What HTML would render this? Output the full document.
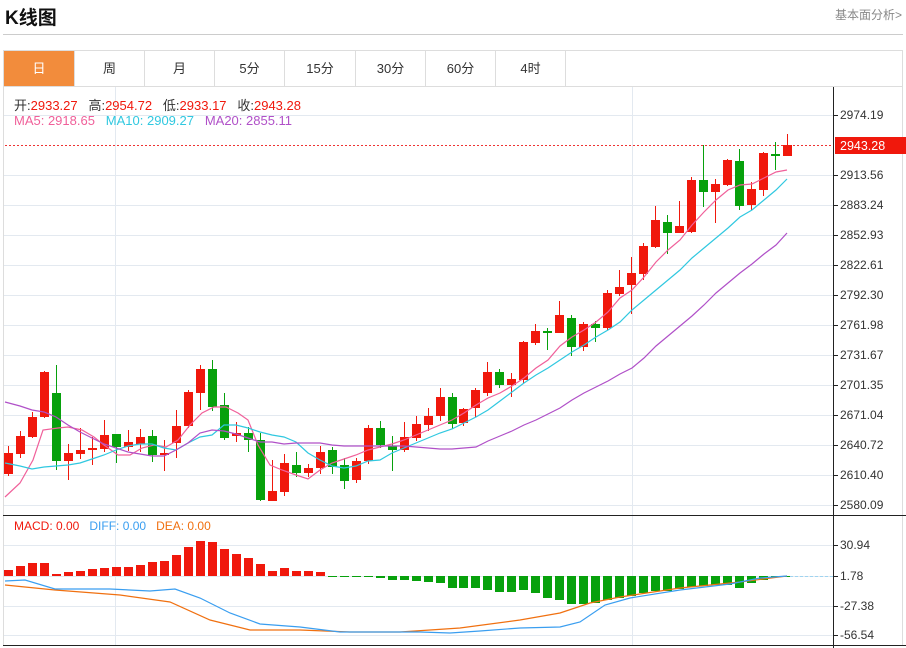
<!DOCTYPE html>
<html><head><meta charset="utf-8">
<style>
*{margin:0;padding:0;box-sizing:border-box}
body{width:906px;height:648px;background:#fff;font-family:"Liberation Sans","Noto Sans CJK SC",sans-serif;position:relative;overflow:hidden}
.t{position:absolute;left:5px;top:3px;font-size:19px;font-weight:bold;color:#111}
.r{position:absolute;right:4px;top:6px;font-size:12px;color:#888}
.hr{position:absolute;left:3px;top:34px;width:900px;height:1px;background:#ccc}
.tabs{position:absolute;left:3px;top:50px;width:900px;height:37px;border:1px solid #ddd;border-bottom:none}
.tab{position:absolute;top:0;height:36px;line-height:36px;text-align:center;font-size:13px;color:#333;border-right:1px solid #ddd}
.on{background:#f28c3c;color:#fff}
svg{position:absolute;left:0;top:0}
.info{position:absolute;left:14px;font-size:13px;white-space:nowrap}
</style></head><body>
<div class="t">K线图</div>
<div class="r">基本面分析&gt;</div>
<div class="hr"></div>
<div class="tabs">
<div class="tab on" style="left:0;width:71px">日</div>
<div class="tab" style="left:71px;width:70px">周</div>
<div class="tab" style="left:141px;width:70px">月</div>
<div class="tab" style="left:211px;width:70px">5分</div>
<div class="tab" style="left:281px;width:71px">15分</div>
<div class="tab" style="left:352px;width:70px">30分</div>
<div class="tab" style="left:422px;width:70px">60分</div>
<div class="tab" style="left:492px;width:70px">4时</div>
</div>
<svg id="s" width="906" height="648"></svg>
<div class="info" style="top:95px;color:#333">开:<span style="color:#f0180c">2933.27</span>&nbsp;&nbsp; 高:<span style="color:#f0180c">2954.72</span>&nbsp;&nbsp; 低:<span style="color:#f0180c">2933.17</span>&nbsp;&nbsp; 收:<span style="color:#f0180c">2943.28</span></div>
<div class="info" style="top:113px"><span style="color:#f0609a">MA5: 2918.65</span>&nbsp;&nbsp; <span style="color:#30c8e0">MA10: 2909.27</span>&nbsp;&nbsp; <span style="color:#b050c8">MA20: 2855.11</span></div>
<div class="info" style="top:519px;font-size:12px"><span style="color:#f0180c">MACD: 0.00</span>&nbsp;&nbsp; <span style="color:#3a9ef0">DIFF: 0.00</span>&nbsp;&nbsp; <span style="color:#f07010">DEA: 0.00</span></div>
<script>
var s='';
// frame
s+='<rect x="3.5" y="86.5" width="899" height="559" fill="none" stroke="#ddd"/>';
var gy=[115,145,175,205,235,265,295,325,355,385,415,445,475,505];
gy.forEach(function(y){if(y!=145)s+='<line x1="4" x2="833" y1="'+(y+.5)+'" y2="'+(y+.5)+'" stroke="#e3e9f0"/>';});
[545,576,606,635].forEach(function(y){s+='<line x1="4" x2="833" y1="'+(y+.5)+'" y2="'+(y+.5)+'" stroke="#e3e9f0"/>';});
[115,632].forEach(function(x){s+='<line y1="87" y2="645" x1="'+(x+.5)+'" x2="'+(x+.5)+'" stroke="#e3e9f0"/>';});
s+='<line x1="833.5" x2="833.5" y1="87" y2="648" stroke="#222"/>';
s+='<line x1="3" x2="906" y1="515.5" y2="515.5" stroke="#222"/>';
s+='<line x1="3" x2="906" y1="645.5" y2="645.5" stroke="#222"/>';
var lab=[[115,'2974.19'],[175,'2913.56'],[205,'2883.24'],[235,'2852.93'],[265,'2822.61'],[295,'2792.30'],[325,'2761.98'],[355,'2731.67'],[385,'2701.35'],[415,'2671.04'],[445,'2640.72'],[475,'2610.40'],[505,'2580.09'],[545,'30.94'],[576,'1.78'],[606,'-27.38'],[635,'-56.54']];
lab.forEach(function(l){s+='<line x1="833" x2="838" y1="'+(l[0]+.5)+'" y2="'+(l[0]+.5)+'" stroke="#222"/><text x="840" y="'+(l[0]+4)+'" font-size="12" fill="#333" font-family="Liberation Sans,sans-serif">'+l[1]+'</text>';});
s+='<line x1="5" x2="833" y1="145.5" y2="145.5" stroke="#e33" stroke-dasharray="2,2"/>';
s+='<rect x="835" y="137" width="71" height="17" fill="#f0180c"/><text x="840" y="150" font-size="12.5" fill="#fff" font-family="Liberation Sans,sans-serif">2943.28</text>';
// candles: [x, bodyTop, bodyBot, wickTop, wickBot, red?]
var C=[[8,453,474,446,476,1],[20,436,454,431,458,1],[32,417,437,412,438,1],[44,372,417,371,418,1],[56,393,461,365,470,0],[68,453,461,444,480,1],[80,450,454,428,459,1],[92,448,450,437,465,1],[104,435,449,420,452,1],[116,434,447,434,463,0],[128,442,447,430,451,1],[140,437,444,429,452,1],[152,436,455,430,462,0],[164,453,455,440,471,1],[176,426,443,410,458,1],[188,392,426,390,428,1],[200,369,393,365,410,1],[212,369,407,360,411,0],[224,405,438,393,440,0],[236,433,436,422,442,1],[248,433,440,427,452,0],[260,440,500,433,501,0],[272,491,501,460,501,1],[284,463,492,454,496,1],[296,465,473,452,477,0],[308,468,473,464,477,1],[320,452,468,446,474,1],[332,450,467,447,474,0],[344,465,481,458,489,0],[356,461,480,458,483,1],[368,428,461,425,464,1],[380,428,445,421,448,0],[392,446,450,436,471,0],[404,437,450,422,452,1],[416,424,438,416,441,1],[428,416,425,408,431,1],[440,397,416,388,421,1],[452,397,424,393,429,0],[463,409,423,408,426,1],[475,390,408,388,417,1],[487,372,393,362,396,1],[499,372,385,369,388,0],[511,379,385,373,397,1],[523,342,380,341,383,1],[535,331,343,324,345,1],[547,331,333,328,350,0],[559,315,333,301,333,1],[571,318,347,315,356,0],[583,324,347,322,351,1],[595,324,328,321,342,0],[607,293,328,290,330,1],[619,287,294,270,296,1],[631,273,285,257,314,1],[643,246,274,243,280,1],[655,220,247,206,248,1],[667,222,233,215,254,0],[679,226,233,201,233,1],[691,180,232,177,233,1],[703,180,192,145,207,0],[715,184,192,179,223,1],[727,160,185,159,186,1],[739,161,206,149,210,0],[751,189,205,182,210,1],[763,153,190,152,196,1],[775,154,156,142,170,0],[787,145,156,134,156,1]];
var R='#f0180c',G='#07a10c';
C.forEach(function(c){var col=c[5]?R:G;s+='<line x1="'+(c[0]+.5)+'" x2="'+(c[0]+.5)+'" y1="'+c[3]+'" y2="'+c[4]+'" stroke="'+col+'"/>';s+='<rect x="'+(c[0]-4)+'" y="'+c[1]+'" width="9" height="'+Math.max(2,c[2]-c[1])+'" fill="'+col+'"/>';});
function pl(a,col){s+='<polyline fill="none" stroke="'+col+'" stroke-width="1.2" points="'+a.join(' ')+'"/>';}
pl(['5,497','20,483','33,460','43,430','58,428','68,427','82,430','94,437','104,445','118,455','130,455','142,448','154,445','166,447','178,440','190,425','202,413','214,407','226,407','238,413','248,420','258,445','270,465','282,470','296,475','308,479','320,470','332,463','344,459','356,455','368,450','380,447','392,444','404,440','416,435','428,430','440,425','452,420','464,413','476,405','488,398','500,393','512,386','524,378','536,368','548,360','560,346','572,337','584,330','596,322','608,312','620,298','632,290','644,277','656,262','668,250','680,240','692,225','704,212','716,200','728,190','740,185','752,184','764,178','776,172','787,170'],'#f0609a');
pl(['5,463','20,466','32,469','44,467','56,466','68,465','80,463','92,459','104,455','116,450','128,446','140,444','152,444','164,448','176,450','188,443','200,437','212,435','224,425','236,425','248,428','260,432','272,435','284,437','296,442','308,453','320,460','332,466','344,468','356,466','368,461','380,460','392,453','404,448','416,443','428,438','440,433','452,429','464,423','476,417','488,410','500,401','512,392','524,383','536,375','548,368','560,360','572,352','584,345','596,337','608,330','620,322','632,310','644,300','656,290','668,280','680,270','692,258','704,248','716,238','728,228','740,217','752,210','764,200','776,190','787,179'],'#30c8e0');
pl(['5,402','20,406','32,410','44,412','56,417','68,425','80,432','92,438','104,444','116,448','128,452','140,454','152,456','164,456','176,450','188,443','200,433','212,430','224,431','236,434','248,438','260,442','272,442','284,444','296,443','308,443','320,443','332,445','344,446','356,446','368,446','380,446','392,446','404,446','416,447','428,448','440,449','452,449','464,448','476,447','488,441','500,436','512,431','524,425','536,420','548,414','560,408','572,400','584,393','596,387','608,381','620,374','632,368','644,358','656,346','668,336','680,326','692,316','704,305','716,293','728,283','740,273','752,264','764,254','776,245','787,233'],'#b050c8');
// macd bars
var M=[570,566,563,563,574,572,571,569,568,567,567,565,562,561,555,547,541,542,549,554,558,564,571,568,571,571,572,576,577,576,576,578,580,580,581,582,583,588,588,588,590,592,592,590,593,598,600,604,604,603,600,598,596,593,591,591,589,587,586,585,585,588,583,580,577,576];
M.forEach(function(v,i){var x=C[i][0];var y1=Math.min(v,576),h=Math.max(1,Math.abs(576-v));s+='<rect x="'+(x-4)+'" y="'+y1+'" width="9" height="'+h+'" fill="'+(v<576?R:G)+'"/>';});
s+='<line x1="790" x2="833" y1="576.5" y2="576.5" stroke="#9fd4f0" stroke-dasharray="3,2"/>';
pl(['5,585','55,590','120,595','170,602','210,620','250,630','300,630','350,632','400,632','460,628','520,620','560,613','590,603','620,597','680,588','740,582','787,576'],'#f07010');
pl(['5,581','25,580','55,589','110,589','150,591','175,589','200,598','230,613','260,624','300,627','340,632','380,632','420,632','450,633','480,631','520,628','560,627','580,622','605,605','630,598','680,590','730,584','760,578','787,576'],'#3a9ef0');
document.getElementById('s').innerHTML=s;
</script>
</body></html>
